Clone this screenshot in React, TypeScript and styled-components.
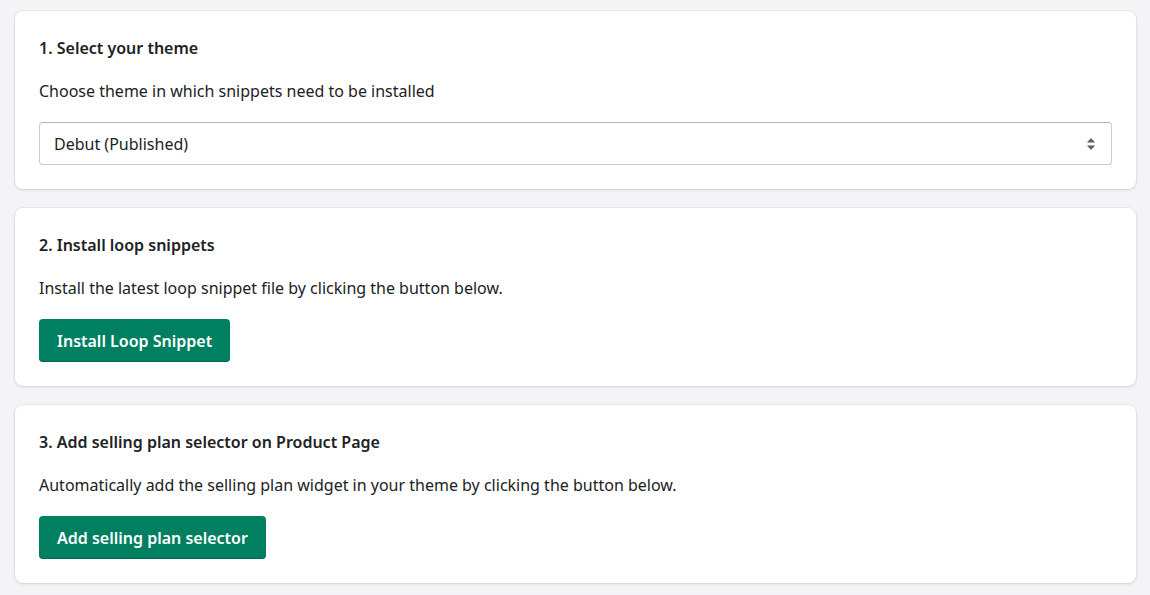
import styled, { createGlobalStyle } from "styled-components";

const GlobalStyle = createGlobalStyle`
  * {
    box-sizing: border-box;
  }
  body {
    margin: 0;
    background: #f4f4f6;
    font-family: "Noto Sans", "Open Sans", sans-serif;
    color: #202223;
  }
`;

const Page = styled.div`
  display: flex;
  flex-direction: column;
  gap: 19px;
  padding: 11px 14px 12px 15px;
`;

const Card = styled.section`
  display: flex;
  flex-direction: column;
  gap: 19px;
  padding: 25px 24px 24px;
  background: #ffffff;
  border-radius: 8px;
  box-shadow: 0 0 0 1px rgba(63, 63, 68, 0.05), 0 1px 3px rgba(63, 63, 68, 0.15);
`;

const Title = styled.h2`
  margin: 0;
  font-size: 16px;
  line-height: 24px;
  font-weight: 600;
`;

const Text = styled.p`
  margin: 0;
  font-size: 16px;
  line-height: 24px;
  font-weight: 400;
`;

const SelectBox = styled.div`
  position: relative;
  display: flex;
  align-items: center;
  height: 43px;
  padding: 0 14px;
  border: 1px solid #c9cccf;
  border-top-color: #aeb4b9;
  border-radius: 4px;
  font-size: 16px;
  line-height: 24px;
`;

const Arrows = styled.svg`
  position: absolute;
  right: 14px;
  top: 50%;
  transform: translateY(-50%);
`;

const Button = styled.button`
  align-self: flex-start;
  height: 43px;
  padding: 0 18px;
  border: none;
  border-radius: 4px;
  background: #008060;
  box-shadow: inset 0 -1px 0 rgba(0, 0, 0, 0.2);
  color: #ffffff;
  font-family: inherit;
  font-size: 16px;
  font-weight: 600;
  cursor: pointer;
`;

export default function App() {
  return (
    <>
      <GlobalStyle />
      <Page>
        <Card>
          <Title>1. Select your theme</Title>
          <Text>Choose theme in which snippets need to be installed</Text>
          <SelectBox>
            Debut (Published)
            <Arrows width="12" height="16" viewBox="0 0 12 16">
              <path d="M6 2 L10 6.5 H2 Z" fill="#5c5f62" />
              <path d="M6 14 L10 9.5 H2 Z" fill="#5c5f62" />
            </Arrows>
          </SelectBox>
        </Card>
        <Card>
          <Title>2. Install loop snippets</Title>
          <Text>Install the latest loop snippet file by clicking the button below.</Text>
          <Button>Install Loop Snippet</Button>
        </Card>
        <Card>
          <Title>3. Add selling plan selector on Product Page</Title>
          <Text>
            Automatically add the selling plan widget in your theme by clicking the button below.
          </Text>
          <Button>Add selling plan selector</Button>
        </Card>
      </Page>
    </>
  );
}
